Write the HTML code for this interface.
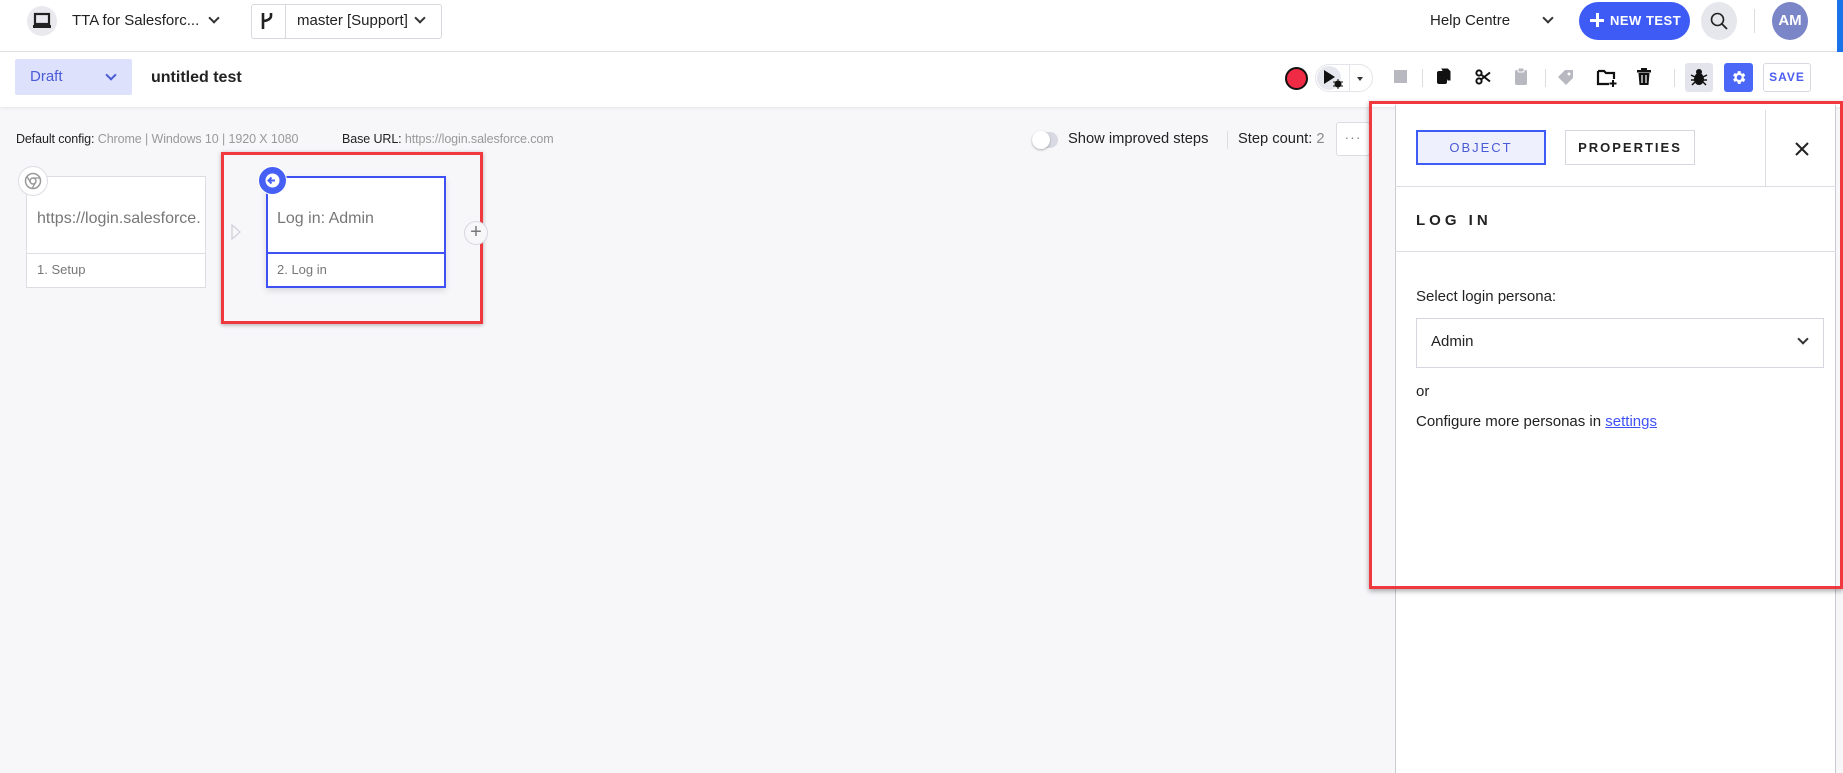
<!DOCTYPE html>
<html><head><meta charset="utf-8"><style>
*{box-sizing:border-box;margin:0;padding:0}
body{width:1843px;height:773px;overflow:hidden;background:#f7f7fa;font-family:"Liberation Sans",sans-serif;position:relative;color:#222}
.a{position:absolute}
.top{left:0;top:0;width:1843px;height:52px;background:#fff;border-bottom:1px solid #e2e2e6}
.bar{left:0;top:52px;width:1843px;height:55px;background:#fff;box-shadow:0 1px 3px rgba(0,0,0,.08)}
.chev{width:8px;height:8px;border-right:2px solid #333;border-bottom:2px solid #333;transform:rotate(45deg)}
</style></head><body>
<div class="a top"></div>
<div class="a bar"></div>
<div class="a" style="left:27px;top:6px;width:30px;height:30px;border-radius:50%;background:#e9e9ee"></div>
<svg class="a" style="left:32px;top:12px" width="20" height="18" viewBox="0 0 20 18"><rect x="3" y="2" width="14" height="10" fill="none" stroke="#222" stroke-width="2.2"/><rect x="1" y="13" width="18" height="3" fill="#222"/></svg>
<div class="a" style="left:72px;top:12px;font-size:15px">TTA for Salesforc...</div>
<div class="a chev" style="left:210px;top:14px"></div>
<div class="a" style="left:251px;top:4px;width:191px;height:35px;border:1px solid #d8d8de;border-radius:3px;background:#fff"></div>
<div class="a" style="left:285px;top:5px;width:1px;height:33px;background:#d8d8de"></div>
<svg class="a" style="left:260px;top:11px" width="14" height="20" viewBox="0 0 14 20"><path d="M3 2v16M3 2v7c0 2 8 0 8-4V2" fill="none" stroke="#222" stroke-width="2.6"/></svg>
<div class="a" style="left:297px;top:12px;font-size:15px">master [Support]</div>
<div class="a chev" style="left:416px;top:14px"></div>
<div class="a" style="left:1430px;top:12px;font-size:15px">Help Centre</div>
<div class="a chev" style="left:1544px;top:14px"></div>
<div class="a" style="left:1579px;top:2px;width:111px;height:38px;border-radius:19px;background:#3f5bf6;color:#fff;font-weight:bold;font-size:13px;letter-spacing:.5px;line-height:38px;padding-left:31px">NEW TEST</div>
<div class="a" style="left:1590px;top:19px;width:14px;height:2.5px;background:#fff"></div>
<div class="a" style="left:1596px;top:13px;width:2.5px;height:14px;background:#fff"></div>
<div class="a" style="left:1701px;top:2px;width:36px;height:38px;border-radius:50%;background:#e6e7ec"></div>
<svg class="a" style="left:1710px;top:12px" width="18" height="18" viewBox="0 0 18 18"><circle cx="7.5" cy="7.5" r="6" fill="none" stroke="#222" stroke-width="1.6"/><path d="M12 12l5 5" stroke="#222" stroke-width="1.8"/></svg>
<div class="a" style="left:1754px;top:9px;width:1px;height:24px;background:#ddd"></div>
<div class="a" style="left:1772px;top:2px;width:36px;height:38px;border-radius:50%;background:#7b86c8;color:#fff;font-weight:bold;font-size:15px;line-height:38px;text-align:center">AM</div>
<div class="a" style="left:1837px;top:0;width:6px;height:52px;background:#1a73e8"></div>
<div class="a" style="left:15px;top:59px;width:117px;height:36px;background:#dde1fc;border-radius:2px;color:#4a5bd6;font-size:15px;line-height:36px;padding-left:15px">Draft</div>
<div class="a chev" style="left:107px;top:71px;border-color:#4a5bd6"></div>
<div class="a" style="left:151px;top:69px;font-size:16px;font-weight:bold;color:#222">untitled test</div>
<div class="a" style="left:1285px;top:67px;width:23px;height:23px;border-radius:50%;border:2.5px solid #111;background:#ee2a44"></div>
<div class="a" style="left:1315px;top:64px;width:58px;height:28px;border-radius:14px;border:1px solid #e4e4ea;background:#fff"></div>
<div class="a" style="left:1317px;top:66px;width:24px;height:24px;border-radius:50%;background:#e6e7ee"></div>
<div class="a" style="left:1349px;top:65px;width:1px;height:26px;background:#e4e4ea"></div>
<svg class="a" style="left:1322px;top:69px" width="22" height="20" viewBox="0 0 22 20"><path d="M2 1l11 7-11 7z" fill="#111"/><circle cx="16" cy="15" r="3.5" fill="#111"/><path d="M11 13h10M11 17h10M16 10v10" stroke="#111" stroke-width="1"/></svg>
<div class="a" style="left:1357px;top:77px;border:3px solid transparent;border-top:4px solid #333"></div>
<div class="a" style="left:1394px;top:70px;width:13px;height:13px;background:#b8b9c0"></div>
<div class="a" style="left:1422px;top:69px;width:1px;height:18px;background:#ddd"></div>
<svg class="a" style="left:1436px;top:67px" width="16" height="18" viewBox="0 0 16 18"><rect x="1" y="4" width="10" height="13" rx="2" fill="#111"/><path d="M5 1h7l3 3v10h-3" fill="#111" stroke="#fff" stroke-width="1"/></svg>
<svg class="a" style="left:1475px;top:69px" width="16" height="16" viewBox="0 0 16 16"><circle cx="4" cy="4" r="2.6" fill="none" stroke="#111" stroke-width="2"/><circle cx="4" cy="12" r="2.6" fill="none" stroke="#111" stroke-width="2"/><path d="M6 5.5l9 7M6 10.5l9-7" stroke="#111" stroke-width="2"/></svg>
<svg class="a" style="left:1514px;top:67px" width="14" height="18" viewBox="0 0 14 18"><rect x="1" y="3" width="12" height="15" rx="1.5" fill="#b8b9c0"/><rect x="4" y="1" width="6" height="4" rx="1" fill="#b8b9c0" stroke="#fff" stroke-width="1"/></svg>
<div class="a" style="left:1545px;top:69px;width:1px;height:18px;background:#ddd"></div>
<svg class="a" style="left:1557px;top:69px" width="18" height="17" viewBox="0 0 18 17"><path d="M1 8l7-7h8v8l-7 7z" fill="#b8b9c0"/><circle cx="12" cy="5" r="1.5" fill="#fff"/></svg>
<svg class="a" style="left:1596px;top:68px" width="22" height="20" viewBox="0 0 22 20"><path d="M2 3h6l2 2h8v6M13 16H2V3" fill="none" stroke="#111" stroke-width="2.2"/><path d="M17 12v7M13.5 15.5h7" stroke="#111" stroke-width="2"/></svg>
<svg class="a" style="left:1637px;top:68px" width="14" height="17" viewBox="0 0 14 17"><rect x="0" y="2" width="14" height="2.5" fill="#111"/><rect x="4" y="0" width="6" height="2" fill="#111"/><path d="M1.5 5h11l-1 12h-9z" fill="#111"/><path d="M5 7v8M9 7v8" stroke="#fff" stroke-width="1.2"/></svg>
<div class="a" style="left:1674px;top:69px;width:1px;height:18px;background:#ddd"></div>
<div class="a" style="left:1685px;top:63px;width:28px;height:29px;border-radius:3px;background:#e4e5ec"></div>
<svg class="a" style="left:1690px;top:68px" width="18" height="18" viewBox="0 0 18 18"><ellipse cx="9" cy="11" rx="5" ry="6" fill="#111"/><circle cx="9" cy="4" r="3" fill="#111"/><path d="M1 7l4 2M17 7l-4 2M1 12h4M17 12h-4M2 17l3-3M16 17l-3-3" stroke="#111" stroke-width="1.5"/></svg>
<div class="a" style="left:1724px;top:63px;width:29px;height:29px;border-radius:3px;background:#4b67f7"></div>
<svg class="a" style="left:1730px;top:69px" width="17" height="17" viewBox="0 0 24 24"><path fill="#fff" d="M19.4 13a7.5 7.5 0 000-2l2.1-1.6-2-3.5-2.5 1a7 7 0 00-1.7-1L15 3h-4l-.4 2.7a7 7 0 00-1.7 1l-2.5-1-2 3.5L6.5 11a7.5 7.5 0 000 2l-2.1 1.6 2 3.5 2.5-1a7 7 0 001.7 1L11 21h4l.4-2.7a7 7 0 001.7-1l2.5 1 2-3.5zM13 15.5a3.5 3.5 0 110-7 3.5 3.5 0 010 7z"/></svg>
<div class="a" style="left:1763px;top:63px;width:48px;height:29px;border:1px solid #d8d8e0;border-radius:3px;background:#fff;color:#4b5ef0;font-size:12px;font-weight:bold;letter-spacing:1px;line-height:27px;text-align:center">SAVE</div>
<div class="a" style="left:16px;top:132px;font-size:12.5px;white-space:nowrap;letter-spacing:-.1px">Default config: <span style="color:#999">Chrome | Windows 10 | 1920 X 1080</span></div>
<div class="a" style="left:342px;top:132px;font-size:12.5px;white-space:nowrap;letter-spacing:-.1px">Base URL: <span style="color:#999">https://login.salesforce.com</span></div>
<div class="a" style="left:1032px;top:132px;width:26px;height:16px;border-radius:8px;background:#d8d9e2"></div>
<div class="a" style="left:1032px;top:131px;width:18px;height:18px;border-radius:50%;background:#fff;box-shadow:0 1px 2px rgba(0,0,0,.3)"></div>
<div class="a" style="left:1068px;top:131px;font-size:14.7px">Show improved steps</div>
<div class="a" style="left:1227px;top:131px;width:1px;height:18px;background:#ddd"></div>
<div class="a" style="left:1238px;top:131px;font-size:14.7px">Step count: <span style="color:#888">2</span></div>
<div class="a" style="left:1336px;top:122px;width:34px;height:34px;border:1px solid #dcdce2;border-radius:3px;background:#fff;color:#888;font-size:14px;text-align:center;line-height:28px;letter-spacing:1px">···</div>
<div class="a" style="left:26px;top:176px;width:180px;height:112px;background:#fff;border:1px solid #dcdde3"></div>
<div class="a" style="left:26px;top:253px;width:180px;height:1px;background:#dcdde3"></div>
<div class="a" style="left:37px;top:210px;font-size:16px;color:#777">https://login.salesforce.</div>
<div class="a" style="left:37px;top:262px;font-size:13px;color:#777">1. Setup</div>
<div class="a" style="left:18px;top:166px;width:30px;height:30px;border-radius:50%;background:#fff;border:1px solid #dcdde3"></div>
<svg class="a" style="left:24px;top:172px" width="18" height="18" viewBox="0 0 18 18"><circle cx="9" cy="9" r="7.5" fill="none" stroke="#999" stroke-width="1.5"/><circle cx="9" cy="9" r="3" fill="none" stroke="#999" stroke-width="1.5"/><path d="M9 6h7M6.5 10.5L3 4.5M11.5 10.5L8 16.5" stroke="#999" stroke-width="1.3"/></svg>
<svg class="a" style="left:231px;top:224px" width="10" height="16" viewBox="0 0 10 16"><path d="M1 1l8 7-8 7z" fill="none" stroke="#d2d3dc" stroke-width="1.3"/></svg>
<div class="a" style="left:221px;top:152px;width:262px;height:172px;border:3px solid #f0383f;box-shadow:0 1px 4px rgba(0,0,0,.3)"></div>
<div class="a" style="left:266px;top:176px;width:180px;height:112px;background:#fff;border:2px solid #3f51f5;box-shadow:0 3px 6px rgba(0,0,0,.12)"></div>
<div class="a" style="left:266px;top:252px;width:180px;height:2px;background:#3f51f5"></div>
<div class="a" style="left:277px;top:210px;font-size:16px;color:#777">Log in: Admin</div>
<div class="a" style="left:277px;top:262px;font-size:13px;color:#777">2. Log in</div>
<div class="a" style="left:258px;top:166px;width:29px;height:29px;border-radius:50%;background:#4660f5;border:1px solid #fff"></div>
<svg class="a" style="left:264px;top:172px" width="17" height="17" viewBox="0 0 17 17"><circle cx="8.5" cy="8.5" r="7" fill="#fff"/><path d="M11 8.5H5M7.5 5.5l-3 3 3 3" stroke="#4660f5" stroke-width="2" fill="none"/></svg>
<div class="a" style="left:464px;top:221px;width:24px;height:24px;border-radius:50%;border:1px solid #d8d9e0;background:#f7f7fa;color:#777;font-size:20px;text-align:center;line-height:21px">+</div>
<div class="a" style="left:1395px;top:105px;width:441px;height:668px;background:#fff;border-left:1px solid #c9cbd2;border-right:1px solid #c9cbd2"></div>
<div class="a" style="left:1395px;top:186px;width:441px;height:1px;background:#dcdde3"></div>
<div class="a" style="left:1765px;top:110px;width:1px;height:76px;background:#dcdde3"></div>
<div class="a" style="left:1416px;top:130px;width:130px;height:35px;border:2px solid #3f5bf6;background:#eef0fe;color:#4a5bd6;font-size:13px;letter-spacing:2px;text-align:center;line-height:31px">OBJECT</div>
<div class="a" style="left:1565px;top:130px;width:130px;height:35px;border:1px solid #d6d7de;background:#fff;color:#222;font-size:13px;letter-spacing:2px;text-align:center;line-height:33px;font-weight:bold">PROPERTIES</div>
<svg class="a" style="left:1794px;top:141px" width="16" height="16" viewBox="0 0 16 16"><path d="M2 2l12 12M14 2L2 14" stroke="#222" stroke-width="2"/></svg>
<div class="a" style="left:1416px;top:212px;font-size:15px;letter-spacing:4px;color:#222;font-weight:bold">LOG IN</div>
<div class="a" style="left:1395px;top:251px;width:441px;height:1px;background:#dcdde3"></div>
<div class="a" style="left:1416px;top:288px;font-size:15px;color:#222">Select login persona:</div>
<div class="a" style="left:1416px;top:318px;width:408px;height:50px;border:1px solid #d6d7de;background:#fff"></div>
<div class="a" style="left:1431px;top:333px;font-size:15px;color:#222">Admin</div>
<div class="a chev" style="left:1799px;top:335px"></div>
<div class="a" style="left:1416px;top:383px;font-size:15px;color:#222">or</div>
<div class="a" style="left:1416px;top:413px;font-size:15px;color:#222">Configure more personas in <span style="color:#3f51f5;text-decoration:underline">settings</span></div>
<div class="a" style="left:1369px;top:101px;width:474px;height:488px;border:3px solid #f0383f;box-shadow:0 2px 5px rgba(0,0,0,.35)"></div>
</body></html>
